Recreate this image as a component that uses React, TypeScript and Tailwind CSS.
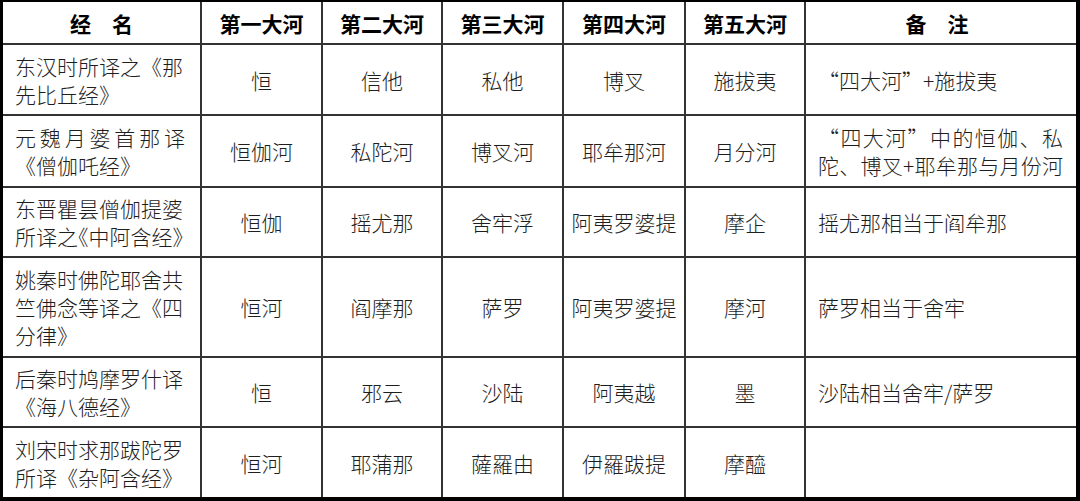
import React from "react";

type Line = { t: string; j?: boolean; halt?: boolean };

const rows: { name: Line[]; r: string[]; note: Line[] }[] = [
  {
    name: [{ t: "东汉时所译之《那" }, { t: "先比丘经》" }],
    r: ["恒", "信他", "私他", "博叉", "施拔夷"],
    note: [{ t: "“四大河”+施拔夷" }],
  },
  {
    name: [{ t: "元魏月婆首那译", j: true }, { t: "《僧伽吒经》" }],
    r: ["恒伽河", "私陀河", "博叉河", "耶牟那河", "月分河"],
    note: [
      { t: "“四大河”中的恒伽、私", j: true },
      { t: "陀、博叉+耶牟那与月份河", j: true },
    ],
  },
  {
    name: [{ t: "东晋瞿昙僧伽提婆" }, { t: "所译之《中阿含经》", halt: true }],
    r: ["恒伽", "摇尤那", "舍牢浮", "阿夷罗婆提", "摩企"],
    note: [{ t: "摇尤那相当于阎牟那" }],
  },
  {
    name: [{ t: "姚秦时佛陀耶舍共" }, { t: "竺佛念等译之《四" }, { t: "分律》" }],
    r: ["恒河", "阎摩那", "萨罗", "阿夷罗婆提", "摩河"],
    note: [{ t: "萨罗相当于舍牢" }],
  },
  {
    name: [{ t: "后秦时鸠摩罗什译" }, { t: "《海八德经》" }],
    r: ["恒", "邪云", "沙陆", "阿夷越", "墨"],
    note: [{ t: "沙陆相当舍牢/萨罗" }],
  },
  {
    name: [{ t: "刘宋时求那跋陀罗" }, { t: "所译《杂阿含经》" }],
    r: ["恒河", "耶蒲那", "薩羅由", "伊羅跋提", "摩醯"],
    note: [],
  },
];

function Lines({ lines }: { lines: Line[] }) {
  return (
    <div className="w-full">
      {lines.map((l, i) => (
        <div
          key={i}
          className={
            "whitespace-nowrap " +
            (l.j ? "[text-align-last:justify] text-justify " : "") +
            (l.halt ? "[font-feature-settings:'halt'] " : "")
          }
        >
          {l.t}
        </div>
      ))}
    </div>
  );
}

export default function App() {
  const headers = ["第一大河", "第二大河", "第三大河", "第四大河", "第五大河"];
  return (
    <div className="w-[1080px] h-[501px] bg-white">
      <div
        className="box-border w-[1080px] h-[501px] border-t-2 border-l-[3px] border-r-4 border-b-4 border-black bg-[#333333] grid gap-[2px] grid-cols-[197px_119px_118px_119px_120px_118px_270px] grid-rows-[41px_69px_70px_68px_98px_68px_69px] text-[21px] leading-[28px] text-[#1e1e1e]"
        style={{ fontFamily: '"Noto Sans CJK SC", "Noto Sans", sans-serif' }}
      >
        <div className="bg-white flex items-center justify-center font-bold text-black">经　名</div>
        {headers.map((h) => (
          <div key={h} className="bg-white flex items-center justify-center font-bold text-black">
            {h}
          </div>
        ))}
        <div className="bg-white flex items-center justify-center font-bold text-black pr-[8px]">备　注</div>
        {rows.map((row, ri) => (
          <React.Fragment key={ri}>
            <div className="bg-white flex items-center pl-[12px] pr-[15px] font-light">
              <Lines lines={row.name} />
            </div>
            {row.r.map((c, ci) => (
              <div key={ci} className="bg-white flex items-center justify-center font-light">
                {c}
              </div>
            ))}
            <div className="bg-white flex items-center pl-[12px] pr-[13px] font-light">
              <Lines lines={row.note} />
            </div>
          </React.Fragment>
        ))}
      </div>
    </div>
  );
}
